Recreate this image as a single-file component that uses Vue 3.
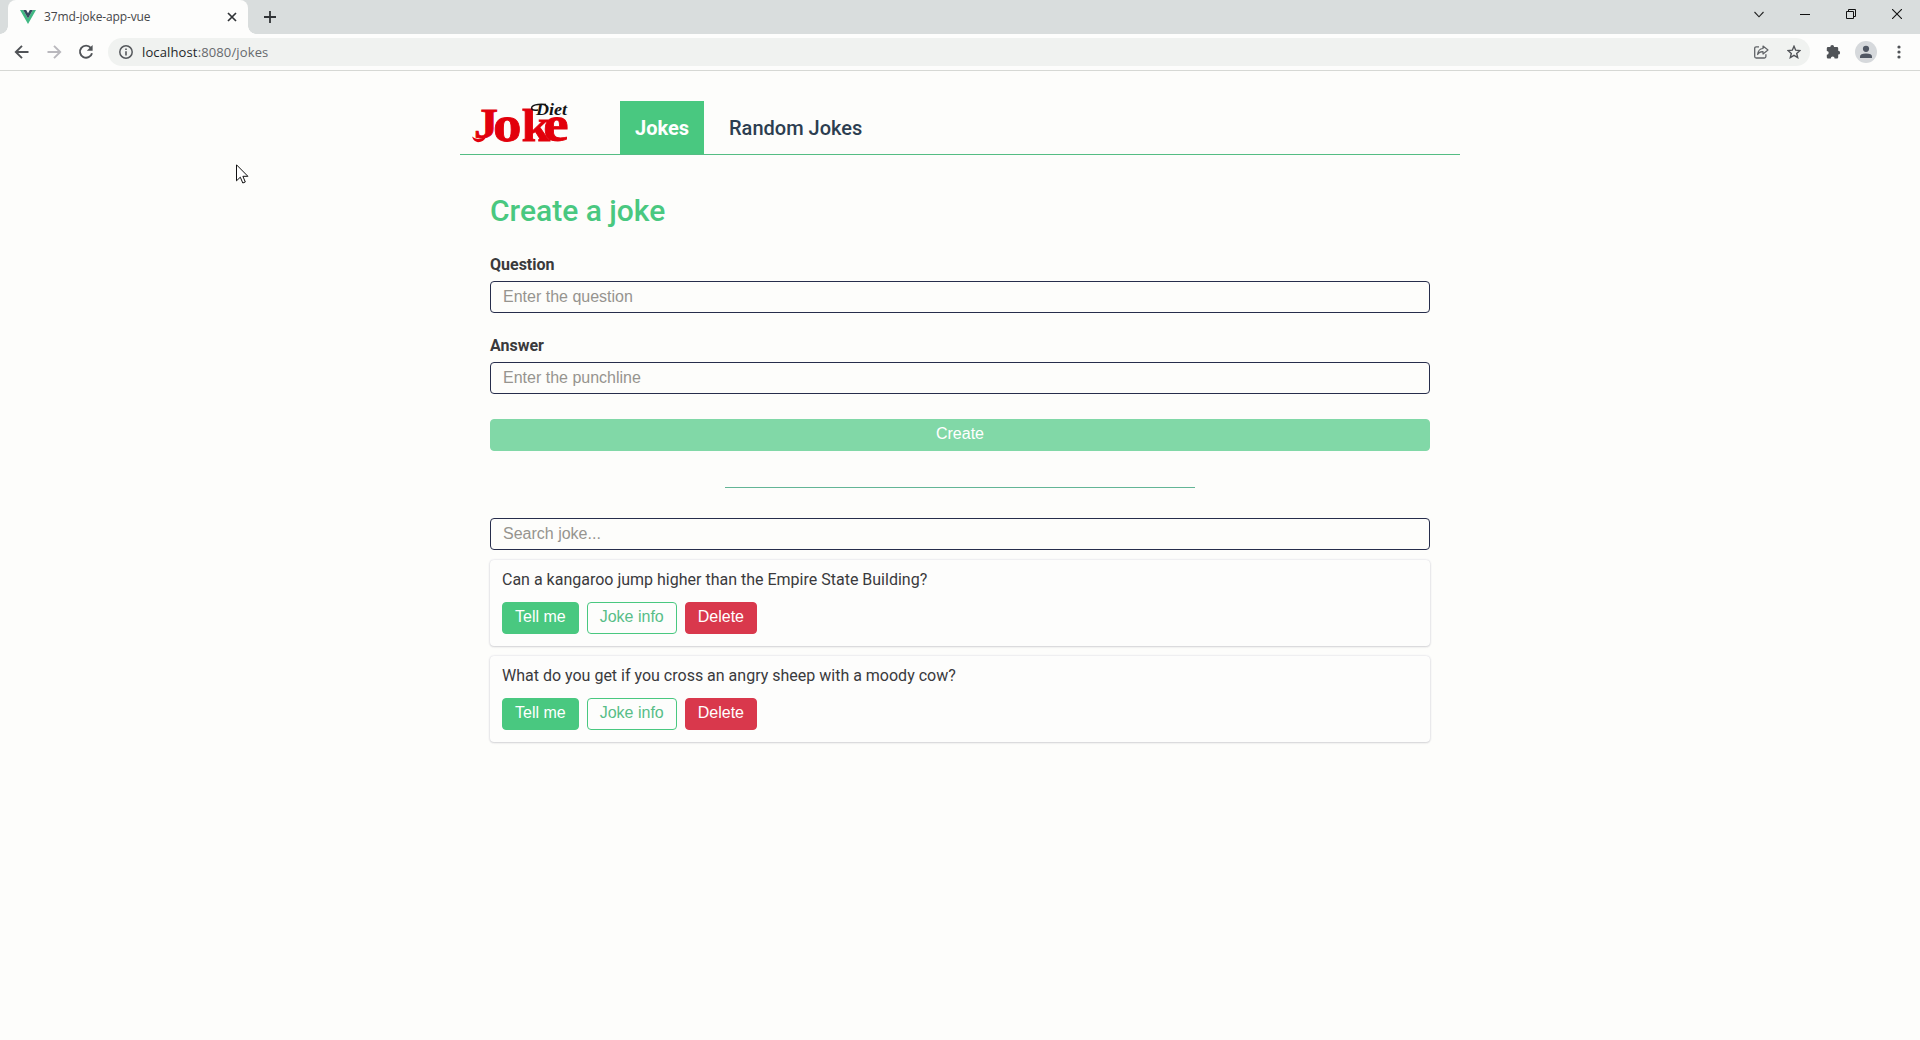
<script setup>
import { ref } from 'vue'

const jokes = ref([
  { id: 1, question: 'Can a kangaroo jump higher than the Empire State Building?' },
  { id: 2, question: 'What do you get if you cross an angry sheep with a moody cow?' },
])
const question = ref('')
const answer = ref('')
const search = ref('')
</script>

<template>
  <div class="window">
    <div class="tabstrip">
      <div class="tab">
        <svg class="favicon" width="16" height="14" viewBox="0 0 16 14">
          <path d="M0 0h3.200L8 8.400 12.800 0H16L8 14z" fill="#41b883" />
          <path d="M3.200 0h3L8 3.200 9.800 0h3L8 8.400z" fill="#35495e" />
        </svg>
        <span class="tab-title">37md-joke-app-vue</span>
        <svg class="tab-close" width="10" height="10" viewBox="0 0 10 10">
          <path d="M1 1l8 8M9 1L1 9" stroke="#303336" stroke-width="1.700" />
        </svg>
      </div>
      <svg class="new-tab" width="12" height="12" viewBox="0 0 12 12">
        <path d="M6 0v12M0 6h12" stroke="#303336" stroke-width="1.800" />
      </svg>
      <div class="win-controls">
        <svg width="10" height="7" viewBox="0 0 10 7"><path d="M.5 1L5 5.800 9.500 1" fill="none" stroke="#222" stroke-width="1.100" /></svg>
        <svg width="10" height="10" viewBox="0 0 10 10"><path d="M0 5.500h10" stroke="#111" /></svg>
        <svg width="10" height="10" viewBox="0 0 10 10"><path d="M.5 2.500h7v7h-7zM2.500 2.500v-2h7v7h-2" fill="none" stroke="#111" /></svg>
        <svg width="10" height="10" viewBox="0 0 10 10"><path d="M0 0l10 10M10 0L0 10" stroke="#111" stroke-width="1.100" /></svg>
      </div>
    </div>

    <div class="toolbar">
      <svg class="nav-icon" width="16" height="16" viewBox="0 0 16 16"><path d="M14.500 8H2.500M8 1.800L1.800 8 8 14.200" fill="none" stroke="#505357" stroke-width="1.900" /></svg>
      <svg class="nav-icon" width="16" height="16" viewBox="0 0 16 16"><path d="M1.500 8h12M8 1.800L14.200 8 8 14.200" fill="none" stroke="#b9b8bd" stroke-width="1.900" /></svg>
      <svg class="nav-icon reload" width="16" height="16" viewBox="0 0 16 16">
        <path d="M12.800 3.800A6.100 6.100 0 1 0 14 9.200" fill="none" stroke="#505357" stroke-width="1.900" />
        <path d="M14.600 1v5.800H8.800z" fill="#505357" />
      </svg>
      <div class="address">
        <svg width="14" height="14" viewBox="0 0 14 14">
          <circle cx="7" cy="7" r="6.200" fill="none" stroke="#55585c" stroke-width="1.500" />
          <path d="M7 6.200v4.200M7 3.500v1.500" stroke="#55585c" stroke-width="1.600" />
        </svg>
        <span class="url">localhost<span>:8080/jokes</span></span>
        <svg class="share" width="15" height="14" viewBox="0 0 15 14">
          <path d="M5 1.800H2.200Q.7 1.800.7 3.300v8.200Q.7 13 2.200 13h8.200q1.500 0 1.500-1.500V9.300" fill="none" stroke="#606367" stroke-width="1.300" />
          <path d="M9 1l5 4-5 4V6.600Q5.200 6.400 3.600 9.500 4 4 9 3.500z" fill="none" stroke="#606367" stroke-width="1.200" stroke-linejoin="round" />
        </svg>
        <svg class="star" width="14" height="14" viewBox="0 0 14 14">
          <path d="M7 1.300l1.700 3.900 4.200.4-3.200 2.800 1 4.200L7 10.400l-3.700 2.200 1-4.200L1.100 5.600l4.200-.4z" fill="none" stroke="#505357" stroke-width="1.400" />
        </svg>
      </div>
      <svg class="puzzle" width="15" height="15" viewBox="0 0 15 15">
        <path d="M4.300 3a1.900 1.900 0 0 1 3.800 0h2.900q1.200 0 1.200 1.200v2.600a1.900 1.900 0 0 1 0 3.800v2.700q0 1.200-1.200 1.200H8.600a1.900 1.900 0 0 0-3.800 0H2Q.8 14.500.8 13.300v-2.600a1.900 1.900 0 0 0 0-3.800V4.200Q.8 3 2 3z" fill="#505357" />
      </svg>
      <svg class="avatar" width="22" height="22" viewBox="0 0 22 22">
        <circle cx="11" cy="11" r="11" fill="#d6d9dc" />
        <circle cx="11" cy="7.800" r="3.100" fill="#505763" />
        <path d="M5 17v-1.600q0-3 6-3t6 3V17z" fill="#505763" />
      </svg>
      <svg class="menu" width="4" height="14" viewBox="0 0 4 14" fill="#505357">
        <circle cx="2" cy="2" r="1.600" /><circle cx="2" cy="7" r="1.600" /><circle cx="2" cy="12" r="1.600" />
      </svg>
    </div>

    <div class="container">
      <header>
        <svg class="logo" width="100" height="44" viewBox="0 0 100 44">
          <text class="word" transform="scale(1.12 1)"><tspan x="3.500" y="35.500" font-size="43">J</tspan><tspan x="20.500" y="39" font-size="51">o</tspan><tspan x="46" y="39" font-size="46">k</tspan><tspan x="65.500" y="39" font-size="51">e</tspan></text>
          <path d="M2 34.500Q6 38 11 36.500L16 35Q14 40 8 40.200 3.500 39.500 2 34.500z" fill="#e2000b" />
          <path d="M68 8Q60 9 62 4.800 65 1.500 76 2.500" fill="none" stroke="#141414" stroke-width="1.400" />
          <text class="diet" x="66" y="13" textLength="31" lengthAdjust="spacingAndGlyphs">Diet</text>
        </svg>
        <nav>
          <a class="active">Jokes</a>
          <a>Random Jokes</a>
        </nav>
      </header>

      <main>
        <h1>Create a joke</h1>
        <form @submit.prevent>
          <label for="question">Question</label>
          <input id="question" v-model="question" type="text" placeholder="Enter the question" />
          <label for="answer">Answer</label>
          <input id="answer" v-model="answer" type="text" placeholder="Enter the punchline" />
          <button class="btn create" disabled>Create</button>
        </form>
        <hr />
        <input v-model="search" class="search" type="text" placeholder="Search joke..." />
        <article v-for="joke in jokes" :key="joke.id" class="card">
          <p>{{ joke.question }}</p>
          <div class="actions">
            <button class="btn tell">Tell me</button>
            <button class="btn info">Joke info</button>
            <button class="btn delete">Delete</button>
          </div>
        </article>
      </main>
    </div>

    <svg class="cursor" width="13" height="20" viewBox="0 0 13 20">
      <path d="M.5.800v16L4.300 13.200 6.800 19 9.300 18 6.900 12.300h5z" fill="#fff" stroke="#111" />
    </svg>
  </div>
</template>

<style>
body {
  background: #fdfdfb;
}
</style>

<style scoped>
.window {
  position: relative;
  height: 1040px;
  overflow: hidden;
  background: #fdfdfb;
  font-family: Roboto, sans-serif;
  color: #3a3a3c;
}
.window * {
  box-sizing: border-box;
}
.tabstrip {
  display: flex;
  align-items: center;
  height: 34px;
  padding-left: 8px;
  background: #d9dddd;
}
.tab {
  position: relative;
  display: flex;
  align-items: center;
  width: 240px;
  height: 34px;
  padding: 0 11px 0 12px;
  border-radius: 8px 8px 0 0;
  background: #fdfdfc;
}
.tab::before,
.tab::after {
  content: '';
  position: absolute;
  bottom: 0;
  width: 8px;
  height: 8px;
}
.tab::before {
  left: -8px;
  background: radial-gradient(circle at 0 0, transparent 7.500px, #fdfdfc 8px);
}
.tab::after {
  right: -8px;
  background: radial-gradient(circle at 100% 0, transparent 7.500px, #fdfdfc 8px);
}
.tab-title {
  margin: -1px 0 0 8px;
  font: 12px 'Open Sans', sans-serif;
  letter-spacing: -0.12px;
  color: #45474a;
}
.tab-close {
  margin-left: auto;
}
.new-tab {
  margin-left: 16px;
}
.win-controls {
  display: flex;
  align-items: center;
  gap: 36px;
  margin: -6px 18px 0 auto;
}
.toolbar {
  display: flex;
  align-items: center;
  height: 37px;
  padding: 0 19px 1px 14px;
  border-bottom: 1px solid #d6d8d4;
  background: #fdfdfc;
}
.nav-icon {
  margin-right: 16px;
}
.reload {
  margin-right: 14px;
}
.address {
  display: flex;
  align-items: center;
  flex: 1;
  height: 28px;
  padding: 0 9px 0 11px;
  border-radius: 14px;
  background: #f0f2f0;
}
.url {
  margin-left: 9px;
  font: 13px 'Open Sans', sans-serif;
  letter-spacing: 0.13px;
  color: #242629;
}
.url span {
  color: #66696d;
}
.share {
  margin-left: auto;
}
.star {
  margin-left: 18px;
}
.puzzle {
  margin-left: 16px;
}
.avatar {
  margin: 0 20px 0 14px;
}
.container {
  width: 1000px;
  margin: 0 auto;
  padding-top: 30px;
}
header {
  display: flex;
  height: 54px;
  border-bottom: 1px solid #54bd83;
}
.logo {
  margin: 1px 50px 0 10px;
  overflow: visible;
}
.word {
  font-family: 'Liberation Serif', serif;
  font-weight: bold;
  fill: #e2000b;
  stroke: #e2000b;
  stroke-width: 0.8px;
}
.diet {
  font: italic bold 16px 'Liberation Serif', serif;
  fill: #141414;
}
nav {
  display: flex;
  gap: 10px;
}
nav a {
  height: 53px;
  padding: 0 15px;
  font-size: 20px;
  font-weight: 500;
  line-height: 55px;
  color: #2c3e50;
}
nav a.active {
  font-weight: 700;
  color: #fff;
  background: #49c880;
}
main {
  padding: 0 30px;
}
h1 {
  margin: 38px 0 0;
  font-size: 30px;
  font-weight: 500;
  line-height: 36px;
  color: #49c880;
}
form {
  display: flex;
  flex-direction: column;
  margin-top: 26px;
}
label {
  margin-bottom: 7px;
  font-size: 16px;
  font-weight: 700;
  line-height: 19px;
}
input {
  display: block;
  width: 100%;
  height: 32px;
  margin: 0 0 23px;
  padding: 0 12px;
  border: 1px solid #272d4c;
  border-radius: 4px;
  background: transparent;
  font: 16px 'Liberation Sans', sans-serif;
}
input::placeholder {
  color: #96948f;
}
.btn {
  height: 32px;
  padding: 0 12px 2px;
  border: 1px solid #49c880;
  border-radius: 4px;
  background: #49c880;
  font: 16px 'Liberation Sans', sans-serif;
  color: #fff;
}
.create {
  margin-top: 2px;
  border-color: #81d8a7;
  background: #81d8a7;
}
hr {
  width: 470px;
  height: 1px;
  margin: 36px auto 30px;
  border: 0;
  background: #63b596;
}
.search {
  margin-bottom: 10px;
}
.card {
  height: 86px;
  margin-bottom: 10px;
  padding: 10px 12px;
  border-radius: 4px;
  box-shadow: 0 0 2px rgba(70, 70, 140, 0.24), 0 1px 2px rgba(60, 60, 60, 0.16);
  background: #fdfdfc;
}
.card p {
  margin: 0 0 13px;
  font-size: 16px;
  line-height: 19px;
}
.actions {
  display: flex;
  gap: 8px;
}
.info {
  background: transparent;
  color: #58bd88;
}
.delete {
  border-color: #d9384c;
  background: #d9384c;
}
.cursor {
  position: absolute;
  left: 236px;
  top: 164px;
}
</style>
